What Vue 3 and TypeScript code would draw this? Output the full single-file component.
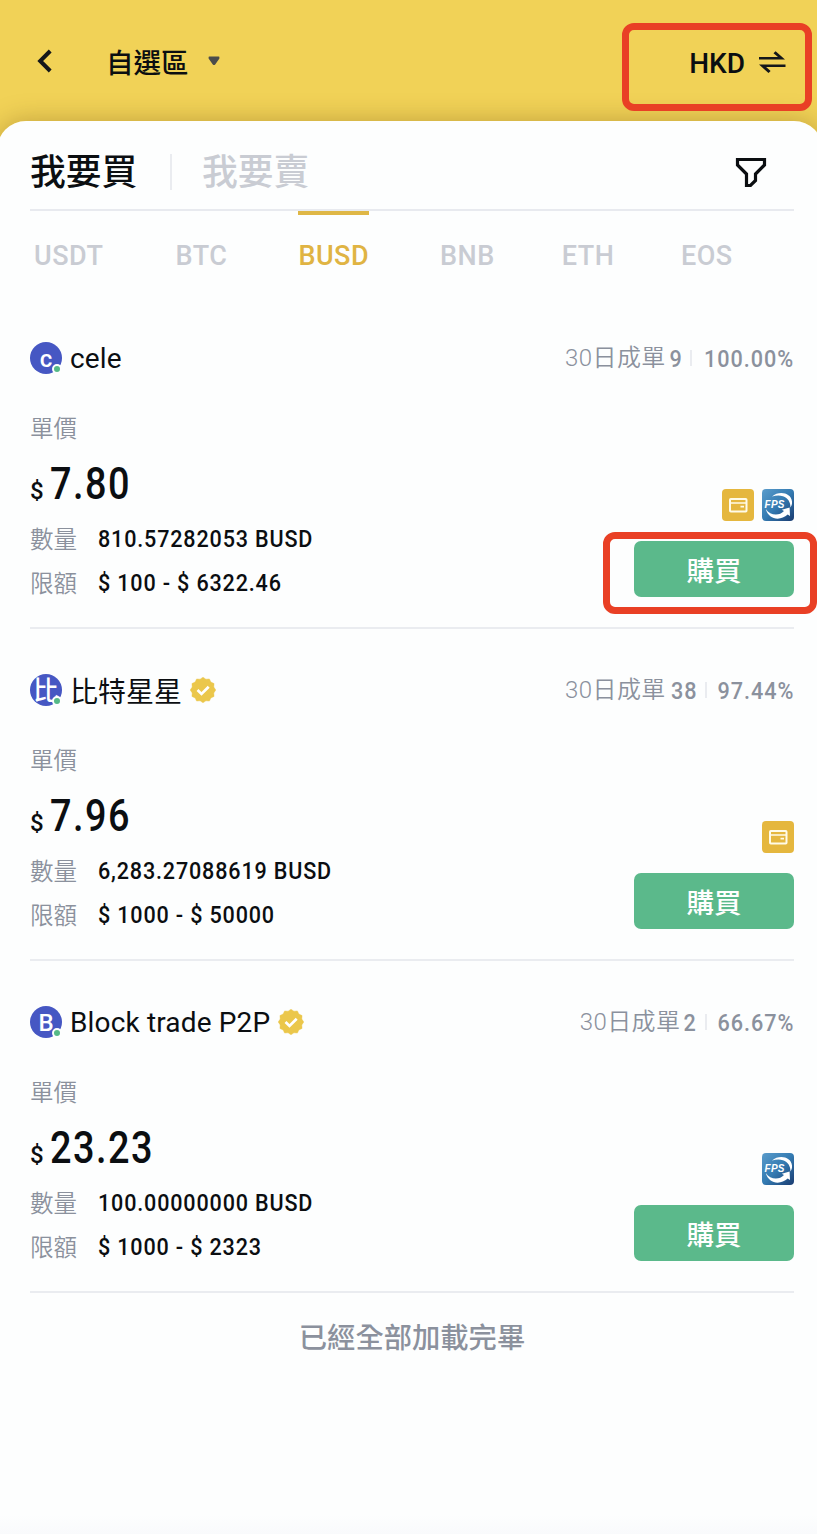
<script setup lang="ts">
interface Offer {
  name: string
  initial: string
  verified: boolean
  orders: string
  rate: string
  price: string
  amount: string
  limit: string
  payments: ('wallet' | 'fps')[]
  highlighted: boolean
}

const coins: string[] = ['USDT', 'BTC', 'BUSD', 'BNB', 'ETH', 'EOS']
const activeCoin = 'BUSD'

const offers: Offer[] = [
  { name: 'cele', initial: 'c', verified: false, orders: '9', rate: '100.00%', price: '7.80', amount: '810.57282053 BUSD', limit: '$ 100 - $ 6322.46', payments: ['wallet', 'fps'], highlighted: true },
  { name: '比特星星', initial: '比', verified: true, orders: '38', rate: '97.44%', price: '7.96', amount: '6,283.27088619 BUSD', limit: '$ 1000 - $ 50000', payments: ['wallet'], highlighted: false },
  { name: 'Block trade P2P', initial: 'B', verified: true, orders: '2', rate: '66.67%', price: '23.23', amount: '100.00000000 BUSD', limit: '$ 1000 - $ 2323', payments: ['fps'], highlighted: false },
]

const badgePoints: string = Array.from({ length: 24 }, (_, i) => {
  const r = i % 2 === 0 ? 12.8 : 11.2
  const a = (i * Math.PI) / 12
  return `${(13 + r * Math.sin(a)).toFixed(2)},${(13 - r * Math.cos(a)).toFixed(2)}`
}).join(' ')
</script>

<template>
  <div class="app">
    <header class="header">
      <svg class="back" width="16" height="24" viewBox="0 0 16 24"><path d="M13.2 2 3.2 12l10 10" fill="none" stroke="#14171a" stroke-width="4" /></svg>
      <span class="zone">自選區</span>
      <svg class="caret" width="12" height="10" viewBox="0 0 12 10"><path d="M.6 1.6Q.4.4 1.4.4h9.2q1 0 .8 1.2v1L7.2 8.4Q6 9.6 4.8 8.4L.6 2.6z" fill="#4b4c4b" /></svg>
      <span class="currency">HKD</span>
      <svg class="swap" width="28" height="24" viewBox="0 0 28 24"><path d="M1 7h19L15.500 3.200 17.600 1.200 27 9.600H1zM27.500 14.500H1L10.500 23l2.100-2L8.100 17.100h19.400z" fill="#14171a" /></svg>
      <i class="mark mark-currency"></i>
    </header>

    <main class="sheet">
      <nav class="sides">
        <span class="side current">我要買</span>
        <i class="side-line"></i>
        <span class="side">我要賣</span>
        <svg class="filter" width="32" height="32" viewBox="0 0 32 32"><path d="M2.5 2.5h27v5.500L20.500 17v6.500l-5 5h-4V17L2.500 8z" fill="none" stroke="#0b0e11" stroke-width="3.200" /></svg>
      </nav>

      <nav class="coins">
        <span v-for="coin in coins" :key="coin" :class="['coin', coin.toLowerCase(), { active: coin === activeCoin }]">{{ coin }}</span>
      </nav>

      <article v-for="offer in offers" :key="offer.name" class="offer">
        <div class="who">
          <span class="avatar" :class="{ cjk: offer.initial === '比' }">{{ offer.initial }}<i class="online"></i></span>
          <span class="name" :class="{ cjk: offer.initial === '比' }">{{ offer.name }}</span>
          <svg v-if="offer.verified" class="badge" width="26" height="26" viewBox="0 0 26 26">
            <polygon :points="badgePoints" fill="#ebc74b" stroke="#ebc74b" stroke-width=".4" stroke-linejoin="round" />
            <path d="M7.500 13l4 3.900 7.200-7.200" fill="none" stroke="#fff" stroke-width="2.700" />
          </svg>
          <span class="stats"><span class="days">30日成單</span><b class="orders">{{ offer.orders }}</b><i class="stat-line"></i><b class="rate">{{ offer.rate }}</b></span>
        </div>
        <div class="label unit">單價</div>
        <div class="body">
          <div class="facts">
            <div class="price"><span class="dollar">$</span><span class="value">{{ offer.price }}</span></div>
            <div class="fact"><span class="label">數量</span><span class="figure">{{ offer.amount }}</span></div>
            <div class="fact"><span class="label">限額</span><span class="figure">{{ offer.limit }}</span></div>
          </div>
          <div class="action">
            <div class="payments">
              <template v-for="pay in offer.payments" :key="pay">
                <svg v-if="pay === 'wallet'" width="32" height="32" viewBox="0 0 32 32">
                  <rect width="32" height="32" rx="4" fill="#e5b73e" />
                  <rect x="8" y="10" width="16.500" height="12.600" rx=".8" fill="none" stroke="#fffbe8" stroke-width="2" />
                  <path d="M8 14h16.500M18.500 17.600h3.500" fill="none" stroke="#fffbe8" stroke-width="1.600" />
                </svg>
                <svg v-else width="32" height="32" viewBox="0 0 32 32">
                  <defs>
                    <linearGradient id="fps-fill" x1="0" y1="0" x2="1" y2="1"><stop offset="0" stop-color="#5a9ccb" /><stop offset=".5" stop-color="#347bb2" /><stop offset="1" stop-color="#193b70" /></linearGradient>
                  </defs>
                  <rect width="32" height="32" rx="4" fill="url(#fps-fill)" />
                  <path d="M10 7.500C17 1.500 29 3.500 30 12.500c.3 2.500-.6 4.500-1.600 6 .3-5-2.400-9.500-7.400-11.200-3.500-1.200-7.200-.8-11 .2z" fill="#fff" />
                  <path d="M3.800 20C8 26.500 17 27.500 22 22l-2.200-1.300 7.800-2.200.4 8.500-2.300-1.400C18 32.500 6.500 30.500 3.800 20z" fill="#fff" />
                  <text x="2.500" y="18.600" class="fps-text" textLength="20">FPS</text>
                </svg>
              </template>
            </div>
            <button class="buy" type="button">購買</button>
            <i v-if="offer.highlighted" class="mark mark-buy"></i>
          </div>
        </div>
      </article>

      <p class="end">已經全部加載完畢</p>
    </main>
  </div>
</template>

<style>
body {
  margin: 0;
  background: #fdfefe;
}
</style>

<style scoped>
.app {
  width: 817px;
  height: 1534px;
  overflow: hidden;
  background: #f1d257;
  color: #0b0e11;
  font-family: Roboto, "Noto Sans CJK TC", sans-serif;
}
.header {
  position: relative;
  display: flex;
  align-items: center;
  box-sizing: border-box;
  height: 121px;
  padding: 2px 31px 0 37px;
}
.back { margin: 0 53px 2px 0; }
.zone { margin-top: -2px; font: 500 27.500px/40px "Noto Sans CJK TC", sans-serif; }
.caret { margin: 0 0 1px 19px; }
.currency {
  margin: 3px 0 0 auto;
  font-size: 28px;
  font-weight: 500;
}
.swap { margin-left: 13px; }
.zone, .currency { position: relative; z-index: 1; }
.mark {
  position: absolute;
  z-index: 2;
  box-sizing: border-box;
  border: 7px solid #e94025;
  border-radius: 12px;
}
.mark-currency { left: 622px; top: 23px; width: 190px; height: 88px; }
.mark-buy { right: -23px; bottom: -17px; width: 214px; height: 82px; }
.sheet {
  box-sizing: border-box;
  height: 1413px;
  margin: 0 -6px 0 -3px;
  padding: 0 29px 0 33px;
  border-radius: 29px 29px 0 0;
  background: linear-gradient(#fdfefe 1394px, #f9fafc 1413px);
  box-shadow: 0 0 26px rgba(120, 85, 20, .4);
}
.sides {
  display: flex;
  align-items: center;
  box-sizing: border-box;
  height: 90px;
  border-bottom: 2px solid #e8eaef;
}
.side {
  padding-top: 7px;
  font: 500 35.800px/50px "Noto Sans CJK TC", sans-serif;
  color: #c9ccd3;
}
.side.current { color: #0b0e11; }
.side-line {
  width: 2px;
  height: 36px;
  margin: 14px 30px 0 32.500px;
  background: #eaecf0;
}
.filter { margin: 16px 27px 0 auto; }
.coins {
  display: flex;
  height: 86px;
  padding-left: 4px;
}
.coin {
  box-sizing: border-box;
  height: 64px;
  padding-top: 25px;
  font-size: 27px;
  line-height: 40px;
  font-weight: 500;
  letter-spacing: .5px;
  color: #c9ccd3;
}
.btc { margin-left: 72px; }
.busd { margin-left: 71px; }
.bnb { margin-left: 71px; }
.eth { margin-left: 67px; }
.eos { margin-left: 66.500px; }
.coin.active {
  color: #e0b443;
  box-shadow: inset 0 4px #dfb746;
}
.offer {
  box-sizing: border-box;
  height: 332px;
  padding-top: 42px;
  border-bottom: 2px solid #eaecf0;
}
.who {
  display: flex;
  align-items: center;
  height: 38px;
}
.avatar {
  position: relative;
  width: 32px;
  height: 32px;
  border-radius: 50%;
  background: #4657c3;
  color: #fff;
  font-size: 24px;
  line-height: 34px;
  font-weight: 500;
  text-align: center;
}
.avatar.cjk { font: 500 26px/30px "Noto Sans CJK TC", sans-serif; }
.online {
  position: absolute;
  right: 0;
  bottom: 0;
  width: 6px;
  height: 6px;
  border: 2px solid #fdfefe;
  border-radius: 50%;
  background: #55b987;
}
.name {
  margin-left: 8px;
  padding-top: 2px;
  font: 400 28px/38px Roboto, sans-serif;
  letter-spacing: .15px;
}
.name.cjk {
  padding-top: 0;
  font: 400 28px/38px "Noto Sans CJK TC", sans-serif;
  letter-spacing: 0;
}
.badge { margin-left: 8px; }
.stats {
  display: flex;
  align-items: center;
  margin: 0 1px 0 auto;
  padding-top: 2px;
  color: #8b919d;
  font-size: 24px;
  line-height: 34px;
}
.days {
  margin-top: -2px;
  font-weight: 350;
  letter-spacing: .4px;
}
.stats b {
  display: block;
  margin-right: -1.100px;
  font-weight: 500;
  letter-spacing: 1.100px;
  transform: scaleX(.9);
  transform-origin: right;
}
.orders { margin-left: 2px; }
.stat-line { width: 2px; height: 16px; margin: -2px 1.500px 0 9px; background: #eaecf0; }
.label {
  color: #8b919d;
  font: 350 23.500px/34px "Noto Sans CJK TC", sans-serif;
}
.unit { margin-top: 33px; }
.body {
  display: flex;
  justify-content: space-between;
  align-items: flex-start;
}
.price {
  display: flex;
  align-items: baseline;
  height: 59px;
  margin-top: 14px;
  line-height: 52px;
  font-weight: 500;
}
.dollar { width: 20px; font-size: 24px; }
.value {
  font-size: 44px;
  letter-spacing: 1.700px;
  transform: scaleX(.86);
  transform-origin: left;
}
.fact {
  display: flex;
  align-items: center;
  height: 44px;
}
.fact .label { margin-top: -3px; }
.figure {
  margin-left: 21px;
  font-size: 24.500px;
  line-height: 34px;
  font-weight: 500;
  letter-spacing: .95px;
  transform: scaleX(.88);
  transform-origin: left;
}
.action {
  position: relative;
  display: flex;
  flex-direction: column;
  align-items: flex-end;
  gap: 20px;
  margin-top: 45px;
}
.payments { display: flex; gap: 8px; height: 32px; }
.fps-text { fill: #fff; font: italic 700 10px "Liberation Sans", sans-serif; }
.buy {
  width: 160px;
  height: 56px;
  padding: 0;
  border: 0;
  border-radius: 7px;
  background: #5bb98b;
  color: #fff;
  font: 500 27.500px/56px "Noto Sans CJK TC", sans-serif;
}
.end {
  margin: 23px 0 0;
  text-align: center;
  color: #8b919d;
  font: 500 28.300px/40px "Noto Sans CJK TC", sans-serif;
}
</style>
